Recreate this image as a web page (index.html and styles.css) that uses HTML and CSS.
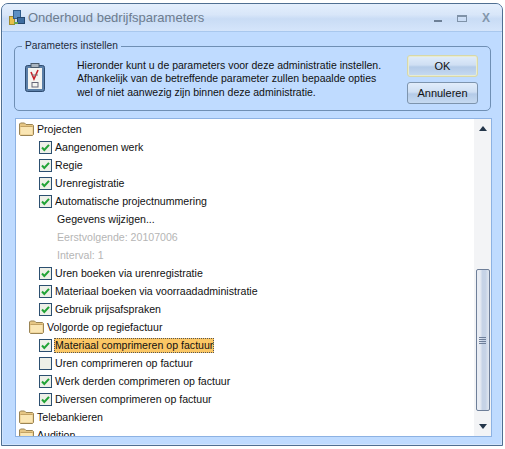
FILE: index.html
```html
<!DOCTYPE html>
<html lang="nl">
<head>
  <meta charset="UTF-8" />
  <title>Onderhoud bedrijfsparameters</title>
  <link rel="stylesheet" href="styles.css">
</head>
<body>
  <svg class="defs" width="0" height="0">
    <symbol id="folder" viewBox="0 0 15 14">
      <path d="M0.5 12.5V2L1.5 1H5.5L7 2.5H13.5L14.5 3.5V12.5L13.5 13.5H1.5Z" fill="#e6c684" stroke="#9a8454"/>
      <path d="M1.5 5H13.5V12.5H1.5Z" fill="#fae6b4"/>
      <path d="M1.5 4.5H13.5" stroke="#c4a364"/>
    </symbol>
    <symbol id="check" viewBox="0 0 13 13">
      <rect x="0.5" y="0.5" width="12" height="12" fill="#eef0e8" stroke="#2c4f70"/>
      <path d="M3 6.5L5.3 9L10 3.8" fill="none" stroke="#22a336" stroke-width="2"/>
    </symbol>
  </svg>

  <div class="window">
    <header class="titlebar">
      <svg class="app-icon" width="16" height="15" viewBox="0 0 16 15">
        <rect x="0.5" y="6.5" width="5" height="8" fill="#e8c04a" stroke="#a08a30"/>
        <rect x="4.5" y="0.5" width="7" height="8" fill="#5c8fc4" stroke="#2f5c8c"/>
        <rect x="8.5" y="7.5" width="7" height="6" fill="#3e6da0" stroke="#24476e"/>
        <rect x="5" y="12" width="4" height="2" fill="#6aa84f"/>
      </svg>
      <span class="title">Onderhoud bedrijfsparameters</span>
      <div class="controls">
        <span class="ctl-min"></span>
        <span class="ctl-max"></span>
        <span class="ctl-close">X</span>
      </div>
    </header>

    <div class="content">
      <fieldset class="group">
        <legend>Parameters instellen</legend>
        <svg class="clip-icon" width="20" height="29" viewBox="0 0 20 29">
          <rect x="0.5" y="2.5" width="19" height="26" rx="2" fill="#5b7fa8" stroke="#2d4b70"/>
          <rect x="3" y="5" width="14" height="21" fill="#f4f4f0"/>
          <rect x="6" y="0.5" width="8" height="4" fill="#a9b4bf" stroke="#4a5a6a"/>
          <path d="M6 9L9 16L13 7" fill="none" stroke="#c8202a" stroke-width="1.6"/>
          <path d="M7 12H13" stroke="#777"/>
          <rect x="7" y="19.5" width="6" height="4.5" fill="none" stroke="#667"/>
        </svg>
        <p class="intro">Hieronder kunt u de parameters voor deze administratie instellen.<br>Afhankelijk van de betreffende parameter zullen bepaalde opties<br>wel of niet aanwezig zijn binnen deze administratie.</p>
        <div class="buttons">
          <button class="btn btn-default">OK</button>
          <button class="btn">Annuleren</button>
        </div>
      </fieldset>

      <div class="panel">
        <ul class="tree">
          <li class="row"><svg class="folder"><use href="#folder"/></svg>Projecten</li>
          <li class="row lvl1"><svg class="box"><use href="#check"/></svg>Aangenomen werk</li>
          <li class="row lvl1"><svg class="box"><use href="#check"/></svg>Regie</li>
          <li class="row lvl1"><svg class="box"><use href="#check"/></svg>Urenregistratie</li>
          <li class="row lvl1"><svg class="box"><use href="#check"/></svg>Automatische projectnummering</li>
          <li class="row lvl2">Gegevens wijzigen...</li>
          <li class="row lvl2 muted">Eerstvolgende: 20107006</li>
          <li class="row lvl2 muted">Interval: 1</li>
          <li class="row lvl1"><svg class="box"><use href="#check"/></svg>Uren boeken via urenregistratie</li>
          <li class="row lvl1"><svg class="box"><use href="#check"/></svg>Materiaal boeken via voorraadadministratie</li>
          <li class="row lvl1"><svg class="box"><use href="#check"/></svg>Gebruik prijsafspraken</li>
          <li class="row sub"><svg class="folder"><use href="#folder"/></svg>Volgorde op regiefactuur</li>
          <li class="row lvl1"><svg class="box"><use href="#check"/></svg><span class="selected">Materiaal comprimeren op factuur</span></li>
          <li class="row lvl1"><span class="box-empty"></span>Uren comprimeren op factuur</li>
          <li class="row lvl1"><svg class="box"><use href="#check"/></svg>Werk derden comprimeren op factuur</li>
          <li class="row lvl1"><svg class="box"><use href="#check"/></svg>Diversen comprimeren op factuur</li>
          <li class="row"><svg class="folder"><use href="#folder"/></svg>Telebankieren</li>
          <li class="row"><svg class="folder"><use href="#folder"/></svg>Audition</li>
        </ul>
        <div class="scrollbar">
          <span class="arrow-up"></span>
          <div class="thumb"><span class="grip"></span></div>
          <span class="arrow-down"></span>
        </div>
      </div>
    </div>
  </div>
</body>
</html>
```

FILE: styles.css
```css
html, body {
  margin: 0;
  height: 100%;
  background: #fff;
  overflow: hidden;
}

body {
  padding: 3px 2px 3px 1px;
  box-sizing: border-box;
  font-family: "Liberation Sans", Arial, sans-serif;
  font-size: 10.6px;
  color: #111;
}

.defs {
  display: block;
  height: 0;
}

.window {
  height: 443px;
  display: flex;
  flex-direction: column;
  background: #bfdbff;
  border: 1px solid #4f6f92;
  border-radius: 7px 7px 0 0;
  box-sizing: border-box;
}

.titlebar {
  height: 27px;
  flex: none;
  display: flex;
  align-items: center;
  padding: 0 5px 0 7px;
  border-radius: 6px 6px 0 0;
  background: linear-gradient(to bottom, #e4effd 0%, #d8e6f9 40%, #c9dcf5 55%, #d5e5fb 100%);
  border-bottom: 1px solid #a9c8ee;
}

.app-icon {
  margin-right: 3px;
}

.title {
  flex: 1;
  font-size: 13px;
  color: #6d7c8e;
}

.controls {
  display: flex;
  align-items: center;
  gap: 15px;
  margin-right: 7px;
}

.ctl-min {
  width: 8px;
  height: 2px;
  margin-top: 6px;
  background: #6d8097;
}

.ctl-max {
  width: 8px;
  height: 4px;
  border: 1px solid #7f92a8;
  border-top-width: 2px;
  margin-top: 2px;
}

.ctl-close {
  font-size: 12px;
  font-weight: bold;
  color: #8396ab;
}

.content {
  flex: 1;
  min-height: 0;
  display: flex;
  flex-direction: column;
  padding: 8px 9px 7px 7px;
  border: 1px solid #d3e5fc;
  border-top: 0;
  background: #bfdbff;
}

.group {
  margin: 0 1px 0 4px;
  padding: 0 12px 0 10px;
  height: 71px;
  box-sizing: border-box;
  display: flex;
  align-items: flex-start;
  border: 1px solid #6f8fb4;
  border-radius: 5px;
  flex: none;
}

.group legend {
  padding: 0 3px;
  margin-left: -3px;
  font-size: 10.2px;
  line-height: 12px;
  color: #1f2c3a;
}

.clip-icon {
  margin-top: 11px;
  margin-right: 32px;
  flex: none;
}

.intro {
  flex: 1;
  margin: 7px 0 0;
  line-height: 13.3px;
  font-size: 10.5px;
  white-space: nowrap;
}

.buttons {
  display: flex;
  flex-direction: column;
  gap: 5px;
  margin-top: 3px;
}

.btn {
  width: 71px;
  height: 22px;
  padding: 0;
  font: inherit;
  font-size: 11px;
  color: #111;
  border: 1px solid #7d94ad;
  border-radius: 3px;
  background: linear-gradient(to bottom, #e1edfb 0%, #cfdff3 45%, #b4cbe8 55%, #c6daf1 100%);
}

.btn-default {
  border-color: #d8d8a8;
  box-shadow: inset 0 0 0 1px #e8ecd0;
}

.panel {
  flex: 1;
  min-height: 0;
  margin: 7px 0 0 5px;
  display: flex;
  background: #fff;
  border: 1px solid #8db2e3;
  overflow: hidden;
}

.tree {
  flex: 1;
  margin: 0;
  padding: 1px 0 0;
  list-style: none;
  overflow: hidden;
}

.row {
  height: 18px;
  display: flex;
  align-items: center;
  padding-left: 3px;
  white-space: nowrap;
}

.sub {
  padding-left: 13px;
}

.lvl1 {
  padding-left: 23px;
}

.lvl2 {
  padding-left: 41px;
}

.muted {
  color: #b5b5b5;
}

.folder {
  width: 15px;
  height: 14px;
  margin-right: 3px;
  flex: none;
}

.box {
  width: 13px;
  height: 13px;
  margin-right: 3px;
  flex: none;
}

.box-empty {
  width: 11px;
  height: 11px;
  margin-right: 3px;
  flex: none;
  background: #eef0e8;
  border: 1px solid #2c4f70;
}

.selected {
  margin-left: -1px;
  padding: 1px 1px 2px;
  background: #fbc765;
  outline: 1px dotted #555;
  outline-offset: -1px;
}

.scrollbar {
  width: 17px;
  flex: none;
  display: flex;
  flex-direction: column;
  align-items: center;
  background: #f3f4f6;
}

.arrow-up {
  margin-top: 7px;
  border: 4px solid transparent;
  border-top: 0;
  border-bottom: 5px solid #24364a;
}

.thumb {
  width: 14px;
  height: 142px;
  margin-top: auto;
  display: flex;
  align-items: center;
  justify-content: center;
  box-sizing: border-box;
  border: 1px solid #6e7f99;
  border-radius: 2px;
  background: linear-gradient(to right, #e9edf4 0%, #e9edf4 25%, #c6d3e6 45%, #c6d3e6 70%, #e2e8f1 100%);
}

.grip {
  width: 7px;
  height: 7px;
  background: repeating-linear-gradient(to bottom, #6e7f99 0, #6e7f99 1px, transparent 1px, transparent 2px);
}

.arrow-down {
  margin-top: 13px;
  margin-bottom: 7px;
  border: 4px solid transparent;
  border-bottom: 0;
  border-top: 5px solid #24364a;
}
```
